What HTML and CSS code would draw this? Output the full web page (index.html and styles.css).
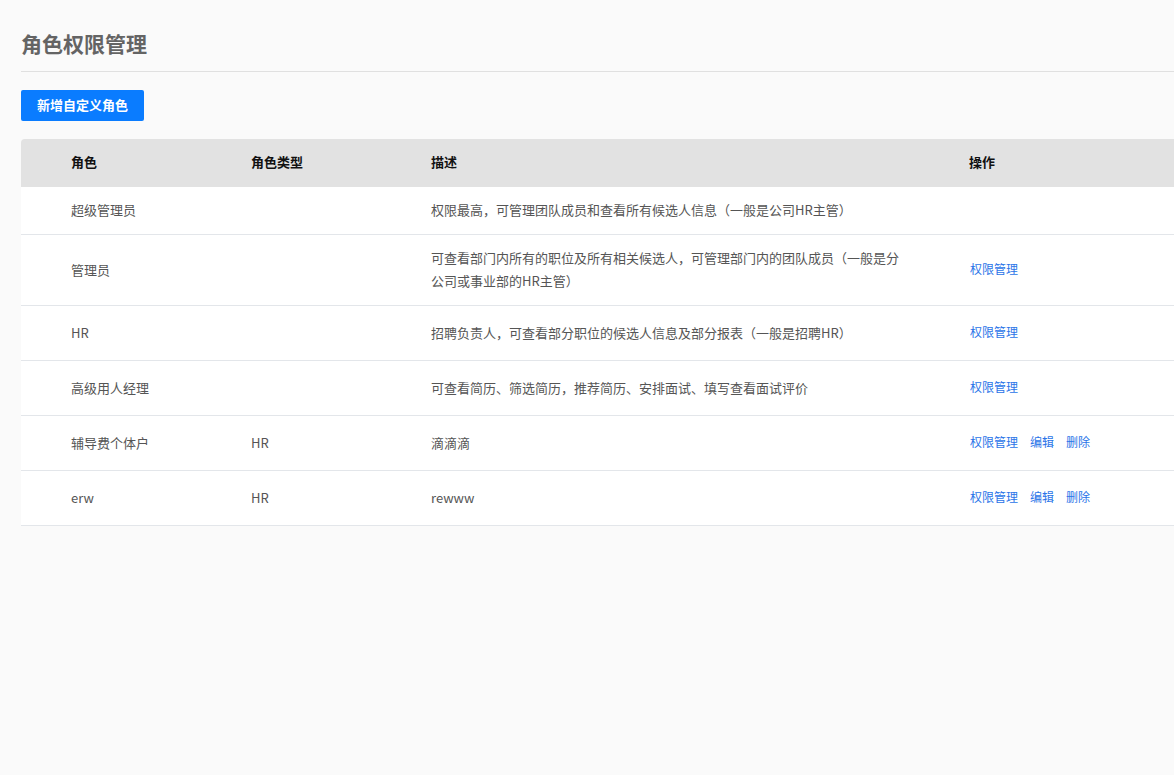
FILE: index.html
```html
<!DOCTYPE html>
<html lang="zh-CN">
<head>
<meta charset="utf-8">
<title>角色权限管理</title>
<link rel="stylesheet" href="styles.css">
</head>
<body>
<div class="page">
  <h1 class="page-title">角色权限管理</h1>
  <div class="toolbar">
    <button class="btn-primary" type="button">新增自定义角色</button>
  </div>
  <table class="role-table">
    <colgroup>
      <col class="c-role">
      <col class="c-type">
      <col class="c-desc">
      <col class="c-ops">
    </colgroup>
    <thead>
      <tr>
        <th class="first">角色</th>
        <th>角色类型</th>
        <th>描述</th>
        <th class="ops-head">操作</th>
      </tr>
    </thead>
    <tbody>
      <tr>
        <td>超级管理员</td>
        <td></td>
        <td>权限最高，可管理团队成员和查看所有候选人信息（一般是公司HR主管）</td>
        <td></td>
      </tr>
      <tr>
        <td>管理员</td>
        <td></td>
        <td>可查看部门内所有的职位及所有相关候选人，可管理部门内的团队成员（一般是分公司或事业部的HR主管）</td>
        <td><a class="op" href="#">权限管理</a></td>
      </tr>
      <tr>
        <td>HR</td>
        <td></td>
        <td>招聘负责人，可查看部分职位的候选人信息及部分报表（一般是招聘HR）</td>
        <td><a class="op" href="#">权限管理</a></td>
      </tr>
      <tr>
        <td>高级用人经理</td>
        <td></td>
        <td>可查看简历、筛选简历，推荐简历、安排面试、填写查看面试评价</td>
        <td><a class="op" href="#">权限管理</a></td>
      </tr>
      <tr>
        <td>辅导费个体户</td>
        <td>HR</td>
        <td>滴滴滴</td>
        <td><a class="op" href="#">权限管理</a><a class="op" href="#">编辑</a><a class="op" href="#">删除</a></td>
      </tr>
      <tr>
        <td>erw</td>
        <td>HR</td>
        <td>rewww</td>
        <td><a class="op" href="#">权限管理</a><a class="op" href="#">编辑</a><a class="op" href="#">删除</a></td>
      </tr>
    </tbody>
  </table>
</div>
</body>
</html>
```

FILE: styles.css
```css
html, body {
  margin: 0;
  padding: 0;
  background: #fafafa;
  overflow: hidden;
}
body {
  font-family: "Noto Sans CJK SC", "Noto Sans", sans-serif;
  color: #555;
  font-size: 13px;
}
.page {
  padding: 0 0 0 21px;
}
.page-title {
  margin: 0;
  padding: 30px 0 14px;
  font-size: 21px;
  line-height: 27px;
  font-weight: 700;
  color: #646464;
  border-bottom: 1px solid #e0e0e0;
}
.toolbar {
  padding: 18px 0 18px;
}
.btn-primary {
  display: block;
  height: 31px;
  padding: 0 16px 2px;
  border: none;
  border-radius: 2px;
  background: #0a7cff;
  color: #fff;
  font-family: inherit;
  font-size: 13px;
  font-weight: 700;
  cursor: pointer;
}
.role-table {
  width: 100%;
  table-layout: fixed;
  border-collapse: separate;
  border-spacing: 0;
}
.c-role { width: 180px; }
.c-type { width: 180px; }
.c-desc { width: 539px; }
.role-table th {
  height: 45px;
  padding: 0 0 3px 50px;
  background: #e2e2e2;
  color: #111;
  font-weight: 700;
  font-size: 13px;
  text-align: left;
}
.role-table th.first {
  border-top-left-radius: 4px;
}
.role-table th.ops-head {
  padding-left: 49px;
}
.role-table td {
  padding: 11px 16px 13px 50px;
  line-height: 23px;
  background: #fff;
  border-bottom: 1px solid #e3e6ea;
  vertical-align: middle;
  color: #555;
  font-size: 13px;
}
.op {
  display: inline-block;
  line-height: 30px;
  margin-right: 12px;
  font-size: 12px;
  color: #2a74e8;
  text-decoration: none;
}
```
